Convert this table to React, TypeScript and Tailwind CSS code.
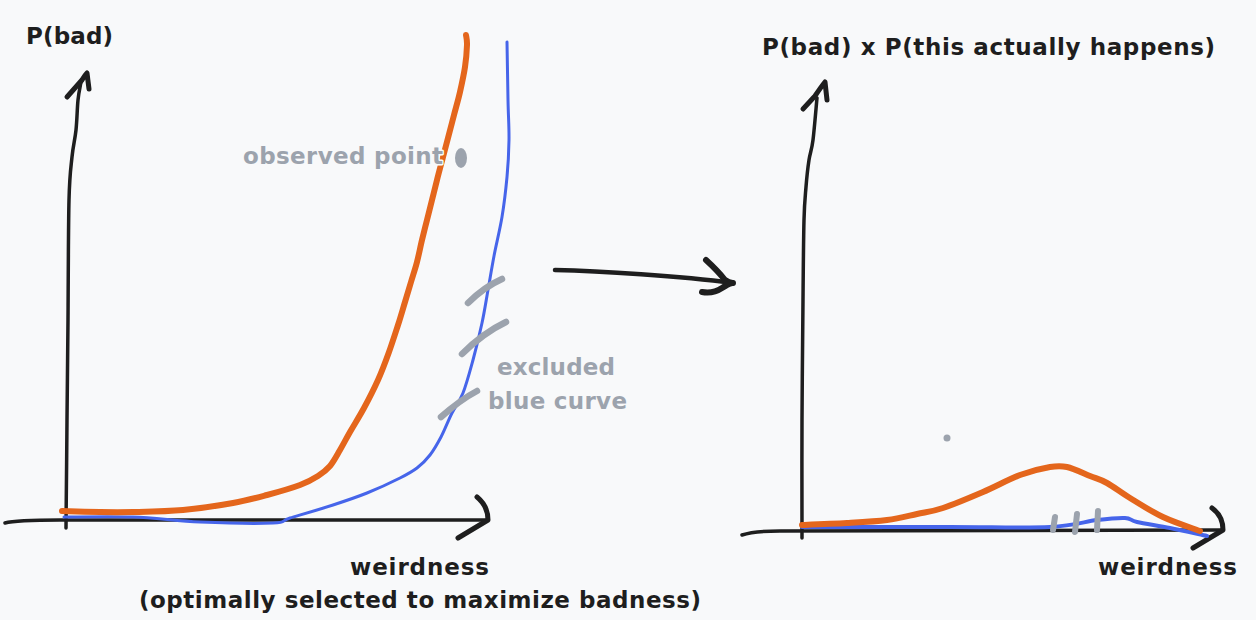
import React from "react";

type P = [number, number];

function smooth(pts: P[]): string {
  let d = `M${pts[0][0]} ${pts[0][1]}`;
  for (let i = 0; i < pts.length - 1; i++) {
    const p0 = pts[i - 1] || pts[i];
    const p1 = pts[i];
    const p2 = pts[i + 1];
    const p3 = pts[i + 2] || p2;
    const c1x = p1[0] + (p2[0] - p0[0]) / 6;
    const c1y = p1[1] + (p2[1] - p0[1]) / 6;
    const c2x = p2[0] - (p3[0] - p1[0]) / 6;
    const c2y = p2[1] - (p3[1] - p1[1]) / 6;
    d += ` C${c1x.toFixed(1)} ${c1y.toFixed(1)} ${c2x.toFixed(1)} ${c2y.toFixed(1)} ${p2[0]} ${p2[1]}`;
  }
  return d;
}

const leftOrange: P[] = [
  [62, 511], [100, 512], [133, 512], [183, 510], [233, 503], [267, 495], [300, 485],
  [318, 476], [330, 466], [340, 450], [350, 432], [364, 408], [378, 380], [389, 352],
  [398, 325], [405, 302], [411, 282], [417, 262], [422, 240], [427, 220], [432, 200],
  [437, 180], [443, 157], [448, 138], [454, 115], [460, 92], [465, 67], [467, 45], [466, 35],
];

const leftBlue: P[] = [
  [64, 517], [133, 517], [200, 522], [273, 523], [290, 518], [333, 505], [367, 493],
  [400, 478], [417, 468], [430, 455], [441, 437], [452, 413], [463, 393], [473, 360],
  [482, 323], [488, 290], [494, 256], [502, 217], [507, 177], [509, 140], [508, 100], [507, 42],
];

const leftYAxis: P[] = [
  [66, 528], [67, 420], [68, 320], [69, 200], [72, 157], [76, 130], [78, 100], [81, 82],
];

const rightOrange: P[] = [
  [802, 525], [847, 523], [887, 520], [917, 514], [943, 508], [983, 492], [1020, 475],
  [1050, 467], [1067, 467], [1090, 476], [1107, 483], [1130, 498], [1163, 517], [1200, 531],
];

const rightBlue: P[] = [
  [802, 527], [950, 527], [1050, 527], [1097, 520], [1125, 518], [1137, 522], [1170, 528], [1207, 536],
];

const rightYAxis: P[] = [
  [802, 538], [802, 420], [803, 300], [804, 220], [806, 187], [809, 160], [813, 140], [817, 98],
];

const ink = "#1e1e1e";
const orange = "#e4661c";
const blue = "#4665ea";
const gray = "#9ca3ad";

const textCls = "[font-family:'DejaVu_Sans',Lato,sans-serif] font-bold text-[23px]";

export default function App() {
  return (
    <div className="flex w-[1256px] h-[620px] bg-[#f8f9fa] overflow-hidden">
      {/* Left chart */}
      <svg className="w-[540px] h-[620px] shrink-0 overflow-visible" viewBox="0 0 540 620" fill="none" strokeLinecap="round" strokeLinejoin="round">
        {/* y axis */}
        <path d={smooth(leftYAxis)} stroke={ink} strokeWidth={3.5} />
        <path d="M67 97 L82 80 Q85 75 87 73 L89 89" stroke={ink} strokeWidth={5} />
        {/* x axis */}
        <path d="M5 523 C12 521 25 520 60 520 L488 520" stroke={ink} strokeWidth={3.5} />
        <path d="M477 497 Q488 506 488 520 L458 538" stroke={ink} strokeWidth={5} />
        {/* curves */}
        <path d={smooth(leftBlue)} stroke={blue} strokeWidth={3} />
        <path d={smooth(leftOrange)} stroke={orange} strokeWidth={6} />
        {/* exclusion slashes */}
        <path d="M468 303 Q484 287 502 279" stroke={gray} strokeWidth={6.5} />
        <path d="M462 354 Q483 333 506 322" stroke={gray} strokeWidth={6.5} />
        <path d="M441 417 Q460 400 477 391" stroke={gray} strokeWidth={6.5} />
        {/* observed point */}
        <ellipse cx={461} cy={158} rx={6} ry={10} fill={gray} />
        {/* labels */}
        <text x={26} y={44} textLength={87} lengthAdjust="spacing" className={`${textCls} fill-[#1e1e1e]`}>P(bad)</text>
        <text x={243} y={164} textLength={200} lengthAdjust="spacing" className={`${textCls} fill-[#9ca3ad] stroke-[#f8f9fa] [stroke-width:3px] [paint-order:stroke]`}>observed point</text>
        <text x={497} y={375} textLength={118} lengthAdjust="spacing" className={`${textCls} fill-[#9ca3ad]`}>excluded</text>
        <text x={488} y={409} textLength={139} lengthAdjust="spacing" className={`${textCls} fill-[#9ca3ad]`}>blue curve</text>
        <text x={350} y={575} textLength={139} lengthAdjust="spacing" className={`${textCls} fill-[#1e1e1e]`}>weirdness</text>
        <text x={139} y={608} textLength={562} lengthAdjust="spacing" className={`${textCls} fill-[#1e1e1e]`}>(optimally selected to maximize badness)</text>
      </svg>

      {/* Middle arrow */}
      <svg className="w-[200px] h-[620px] shrink-0 overflow-visible" viewBox="540 0 200 620" fill="none" strokeLinecap="round" strokeLinejoin="round">
        <path d="M555 270 C600 271 680 276 733 283" stroke={ink} strokeWidth={4.5} />
        <path d="M706 260 Q718 271 725 280 Q729 283 733 283" stroke={ink} strokeWidth={6} />
        <path d="M702 292 Q713 294 722 288 Q728 284 732 283" stroke={ink} strokeWidth={6} />
      </svg>

      {/* Right chart */}
      <svg className="w-[516px] h-[620px] shrink-0 overflow-visible" viewBox="740 0 516 620" fill="none" strokeLinecap="round" strokeLinejoin="round">
        {/* y axis */}
        <path d={smooth(rightYAxis)} stroke={ink} strokeWidth={3.5} />
        <path d="M803 109 L815 96 Q821 87 825 82 L827 100" stroke={ink} strokeWidth={5} />
        {/* x axis */}
        <path d="M742 535 C748 533 760 531 780 531 L1223 530" stroke={ink} strokeWidth={3.5} />
        <path d="M1212 508 Q1223 516 1223 530 L1193 548" stroke={ink} strokeWidth={5} />
        {/* curves */}
        <path d={smooth(rightBlue)} stroke={blue} strokeWidth={4} />
        <path d={smooth(rightOrange)} stroke={orange} strokeWidth={6} />
        {/* ticks */}
        <path d="M1053 530 L1055 517" stroke={gray} strokeWidth={6} />
        <path d="M1075 532 L1077 514" stroke={gray} strokeWidth={6} />
        <path d="M1097 530 L1098 511" stroke={gray} strokeWidth={6} />
        <circle cx={947} cy={438} r={3.5} fill={gray} />
        {/* labels */}
        <text x={762} y={55} textLength={453} lengthAdjust="spacing" className={`${textCls} fill-[#1e1e1e]`}>P(bad) x P(this actually happens)</text>
        <text x={1098} y={575} textLength={139} lengthAdjust="spacing" className={`${textCls} fill-[#1e1e1e]`}>weirdness</text>
      </svg>
    </div>
  );
}
